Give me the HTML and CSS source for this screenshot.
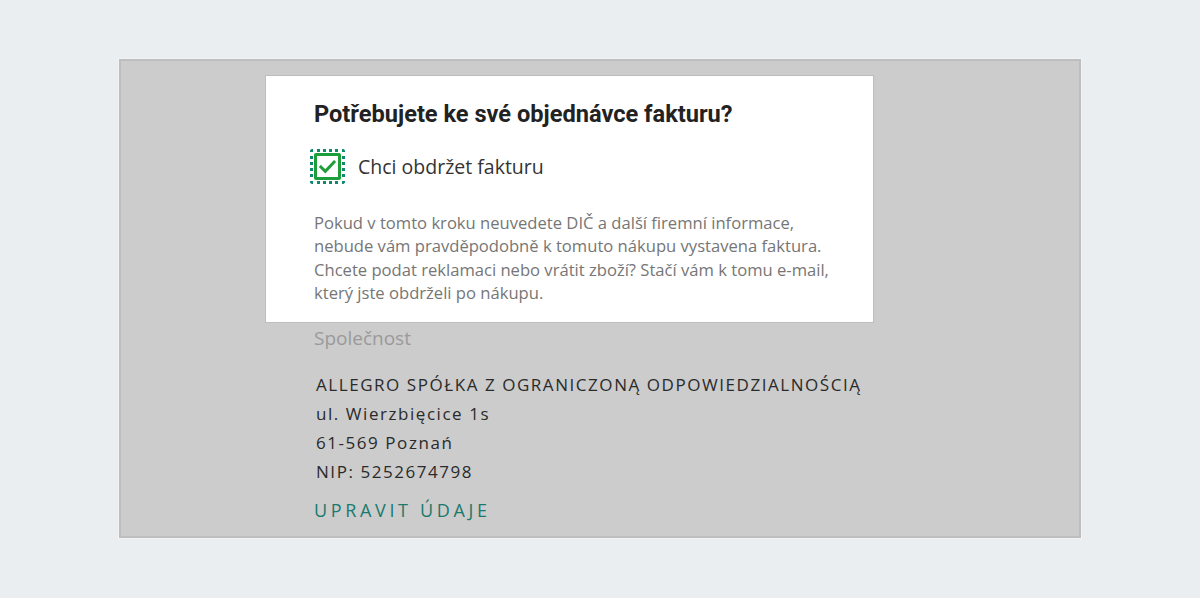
FILE: index.html
```html
<!DOCTYPE html>
<html lang="cs">
<head>
<meta charset="utf-8">
<title>Faktura</title>
<link rel="stylesheet" href="styles.css">
</head>
<body>
<div class="panel">
  <div class="column">
    <div class="card">
      <h2 class="title">Potřebujete ke své objednávce fakturu?</h2>
      <label class="check-row">
        <span class="check-focus">
          <span class="check-box">
            <svg viewBox="0 0 24 24" width="21" height="21"><path d="M4.5 12.5l5 5L19.5 7" fill="none" stroke="#1e9e3a" stroke-width="3.4" stroke-linecap="square"/></svg>
          </span>
        </span>
        <span class="check-label">Chci obdržet fakturu</span>
      </label>
      <p class="note">Pokud v tomto kroku neuvedete DIČ a další firemní informace, nebude vám pravděpodobně k tomuto nákupu vystavena faktura. Chcete podat reklamaci nebo vrátit zboží? Stačí vám k tomu e-mail, který jste obdrželi po nákupu.</p>
    </div>
    <div class="company">
      <div class="company-title">Společnost</div>
      <div class="address">
        <div class="addr-line">ALLEGRO SPÓŁKA Z OGRANICZONĄ ODPOWIEDZIALNOŚCIĄ</div>
        <div class="addr-line">ul. Wierzbięcice 1s</div>
        <div class="addr-line">61-569 Poznań</div>
        <div class="addr-line">NIP: 5252674798</div>
      </div>
      <a class="edit" href="#">UPRAVIT ÚDAJE</a>
    </div>
  </div>
</div>
</body>
</html>
```

FILE: styles.css
```css
html, body {
  margin: 0;
  padding: 0;
  background: #ebeef1;
  height: 100%;
}
body {
  padding-top: 59px;
  box-sizing: border-box;
}
.panel {
  width: 962px;
  height: 479px;
  margin: 0 auto;
  box-sizing: border-box;
  background: #cccccc;
  border: 2px solid #bebebe;
  box-shadow: 0 0 0 1px #f2f3f5;
  padding: 14px 0 0 144px;
}
.column {
  width: 609px;
}
.card {
  background: #ffffff;
  border: 1px solid #bdbdbd;
  padding: 23px 30px 18px 48px;
}
.title {
  margin: 0;
  font-family: Roboto, "Liberation Sans", sans-serif;
  font-weight: 700;
  font-size: 23.6px;
  line-height: 30px;
  color: #222222;
}
.check-row {
  display: flex;
  align-items: center;
  gap: 13px;
  margin-top: 20px;
}
.check-focus {
  width: 35px;
  height: 35px;
  box-sizing: border-box;
  border: 3px dotted #0d8a6a;
  border-radius: 3px;
  display: flex;
  align-items: center;
  justify-content: center;
  margin-left: -4px;
}
.check-box {
  width: 27px;
  height: 27px;
  box-sizing: border-box;
  border: 3px solid #1e9e3a;
  border-radius: 2px;
  display: flex;
  align-items: center;
  justify-content: center;
}
.check-box svg {
  display: block;
}
.check-label {
  font-family: "Open Sans", sans-serif;
  font-size: 19.5px;
  color: #333333;
}
.note {
  margin: 27px 0 0;
  font-family: "Open Sans", sans-serif;
  font-size: 16.6px;
  line-height: 23.3px;
  color: #767676;
}
.company {
  padding-left: 49px;
}
.company-title {
  margin-top: 2px;
  font-family: "Open Sans", sans-serif;
  font-size: 19px;
  line-height: 26px;
  color: #9a9a9a;
}
.address {
  margin-top: 19px;
  padding-left: 2px;
}
.addr-line {
  font-family: "Open Sans", sans-serif;
  font-size: 17px;
  line-height: 29px;
  letter-spacing: 1.55px;
  color: #2a2a2a;
}
.edit {
  display: inline-block;
  margin-top: 12px;
  font-family: "Open Sans", sans-serif;
  font-size: 18px;
  letter-spacing: 3.65px;
  color: #1a7a6c;
  text-decoration: none;
}
```
